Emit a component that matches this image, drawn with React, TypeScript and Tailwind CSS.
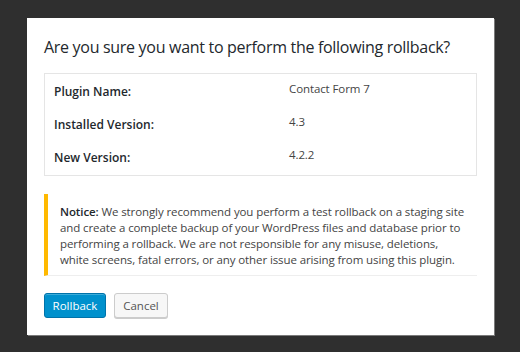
import React from "react";

export default function App() {
  const rows = [
    ["Plugin Name:", "Contact Form 7"],
    ["Installed Version:", "4.3"],
    ["New Version:", "4.2.2"],
  ];
  return (
    <div
      className="w-[520px] h-[352px] bg-[#2f2f2f] pt-[18px] pl-[27px] overflow-hidden"
      style={{ fontFamily: '"Open Sans", "Noto Sans", sans-serif' }}
    >
      <div className="w-[467px] h-[317px] bg-white shadow-[1px_1px_0_#7a7a7a] px-[17px] pt-[17px]">
        <h1 className="text-[16px] leading-[24px] tracking-[-0.3px] text-[#23282d] font-normal whitespace-nowrap">
          Are you sure you want to perform the following rollback?
        </h1>
        <div className="mt-[14px] w-[433px] h-[103px] border border-[#e5e5e5] pt-[5px] pl-[9px]">
          {rows.map(([k, v]) => (
            <div key={k} className="flex h-[33px] items-start">
              <div className="w-[235px] mt-[3px] text-[12px] leading-[20px] font-semibold text-[#23282d]">
                {k}
              </div>
              <div className="text-[11.5px] leading-[20px] tracking-[-0.1px] text-[#444]">{v}</div>
            </div>
          ))}
        </div>
        <div className="mt-[18px] w-[433px] h-[82px] border-l-4 border-[#ffb900] border-b border-b-[#eee] pl-[12px] pr-[12px] pt-[10px] text-[11.5px] leading-[16px] tracking-[-0.1px] text-[#444]">
          <b className="font-semibold text-[#23282d]">Notice:</b> We strongly recommend you perform a test rollback on a staging site and create a complete backup of your WordPress files and database prior to performing a rollback. We are not responsible for any misuse, deletions, white screens, fatal errors, or any other issue arising from using this plugin.
        </div>
        <div className="mt-[17px] flex gap-[8px]">
          <button className="h-[25px] w-[62px] rounded-[3px] bg-[#0091cd] border border-[#0073aa] text-white text-[11.5px] leading-[23px] shadow-[inset_0_1px_0_rgba(120,200,230,0.5)]">
            Rollback
          </button>
          <button className="h-[25px] w-[54px] rounded-[3px] bg-[#f7f7f7] border border-[#ccc] text-[#555] text-[11.5px] leading-[23px] shadow-[0_1px_0_#ccc]">
            Cancel
          </button>
        </div>
      </div>
    </div>
  );
}
